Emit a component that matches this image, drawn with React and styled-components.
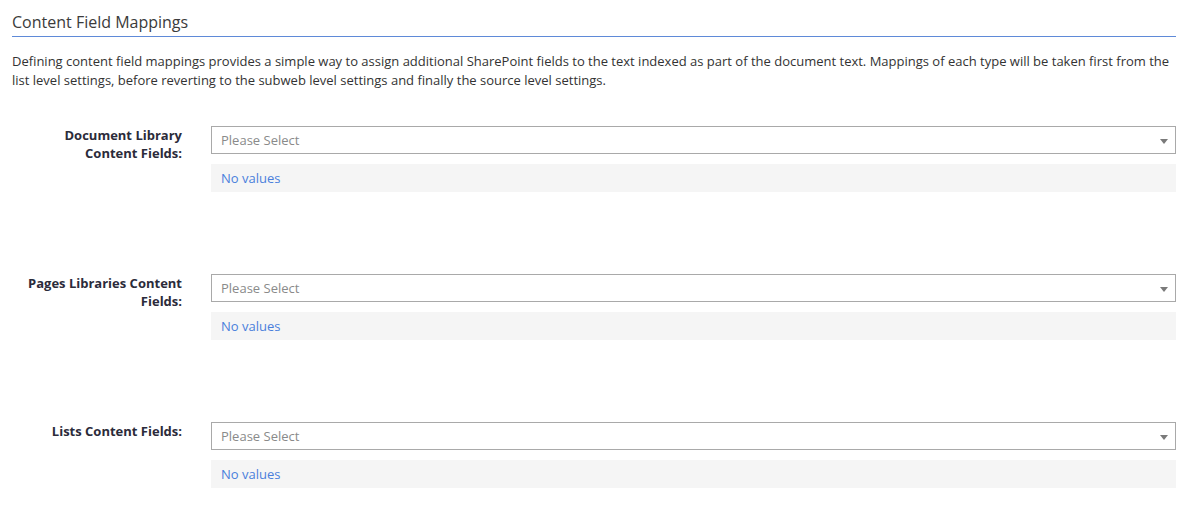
import React from 'react'
import styled, { createGlobalStyle } from 'styled-components'

const GlobalStyle = createGlobalStyle`
  html, body {
    margin: 0;
    padding: 0;
    background: #fff;
  }
  body {
    font-family: "Open Sans", "Liberation Sans", sans-serif;
    color: #333;
  }
`

const Page = styled.div`
  padding: 9px 26px 0 12px;
`

const Heading = styled.h2`
  margin: 0;
  font-size: 16px;
  font-weight: 400;
  line-height: 27px;
  color: #3b3b3b;
  border-bottom: 1px solid #5f8ad8;
`

const Description = styled.p`
  margin: 15px 0 0;
  font-size: 13px;
  line-height: 19px;
  color: #333;
`

const Form = styled.div`
  margin-top: 36px;
  display: flex;
  flex-direction: column;
  gap: 82px;
`

const Row = styled.div`
  display: grid;
  grid-template-columns: 170px 1fr;
  column-gap: 29px;
`

const Label = styled.label`
  text-align: right;
  font-size: 13px;
  font-weight: 700;
  line-height: 18px;
  color: #2b2b3a;
`

const Field = styled.div`
  display: flex;
  flex-direction: column;
  gap: 10px;
`

const Select = styled.div`
  position: relative;
  height: 28px;
  box-sizing: border-box;
  border: 1px solid #a9a9a9;
  background: #fff;
  display: flex;
  align-items: center;
  padding-left: 9px;
  font-size: 13px;
  color: #8a8a8a;
`

const Caret = styled.span`
  position: absolute;
  right: 7px;
  top: 12px;
  width: 0;
  height: 0;
  border-left: 4px solid transparent;
  border-right: 4px solid transparent;
  border-top: 5px solid #7a7a7a;
`

const Values = styled.div`
  height: 28px;
  background: #f5f5f5;
  display: flex;
  align-items: center;
  padding-left: 10px;
  font-size: 13px;
  color: #4a7fdc;
`

const fields = [
  { label: <>Document Library<br />Content Fields:</> },
  { label: <>Pages Libraries Content<br />Fields:</> },
  { label: <>Lists Content Fields:</> },
]

export default function App() {
  return (
    <>
      <GlobalStyle />
      <Page>
        <Heading>Content Field Mappings</Heading>
        <Description>
          Defining content field mappings provides a simple way to assign additional SharePoint fields to the text indexed as part of the document text. Mappings of each type will be taken first from the list level settings, before reverting to the subweb level settings and finally the source level settings.
        </Description>
        <Form>
          {fields.map((f, i) => (
            <Row key={i}>
              <Label>{f.label}</Label>
              <Field>
                <Select>
                  Please Select
                  <Caret />
                </Select>
                <Values>No values</Values>
              </Field>
            </Row>
          ))}
        </Form>
      </Page>
    </>
  )
}
